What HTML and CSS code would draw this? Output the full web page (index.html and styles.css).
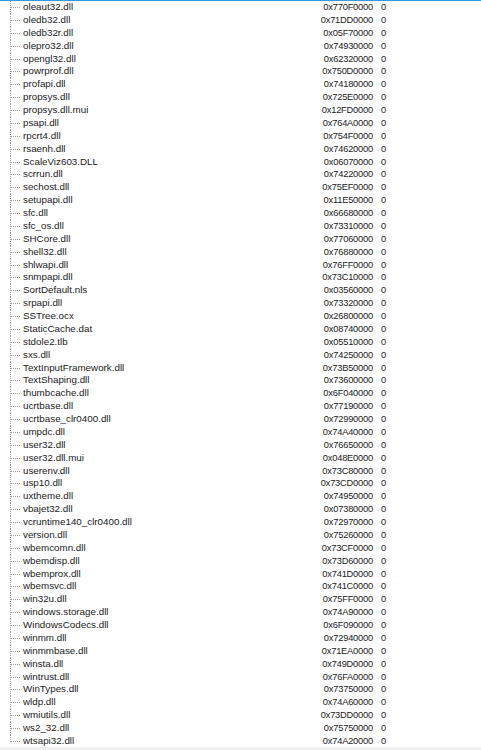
FILE: index.html
```html
<!DOCTYPE html>
<html>
<head>
<meta charset="utf-8">
<link rel="stylesheet" href="styles.css">
</head>
<body>
<div class="panel">
<ul class="tree">
<li class="row"><span class="name">oleaut32.dll</span><span class="addr">0x770F0000</span><span class="val">0</span></li>
<li class="row"><span class="name">oledb32.dll</span><span class="addr">0x71DD0000</span><span class="val">0</span></li>
<li class="row"><span class="name">oledb32r.dll</span><span class="addr">0x05F70000</span><span class="val">0</span></li>
<li class="row"><span class="name">olepro32.dll</span><span class="addr">0x74930000</span><span class="val">0</span></li>
<li class="row"><span class="name">opengl32.dll</span><span class="addr">0x62320000</span><span class="val">0</span></li>
<li class="row"><span class="name">powrprof.dll</span><span class="addr">0x750D0000</span><span class="val">0</span></li>
<li class="row"><span class="name">profapi.dll</span><span class="addr">0x74180000</span><span class="val">0</span></li>
<li class="row"><span class="name">propsys.dll</span><span class="addr">0x725E0000</span><span class="val">0</span></li>
<li class="row"><span class="name">propsys.dll.mui</span><span class="addr">0x12FD0000</span><span class="val">0</span></li>
<li class="row"><span class="name">psapi.dll</span><span class="addr">0x764A0000</span><span class="val">0</span></li>
<li class="row"><span class="name">rpcrt4.dll</span><span class="addr">0x754F0000</span><span class="val">0</span></li>
<li class="row"><span class="name">rsaenh.dll</span><span class="addr">0x74620000</span><span class="val">0</span></li>
<li class="row"><span class="name">ScaleViz603.DLL</span><span class="addr">0x06070000</span><span class="val">0</span></li>
<li class="row"><span class="name">scrrun.dll</span><span class="addr">0x74220000</span><span class="val">0</span></li>
<li class="row"><span class="name">sechost.dll</span><span class="addr">0x75EF0000</span><span class="val">0</span></li>
<li class="row"><span class="name">setupapi.dll</span><span class="addr">0x11E50000</span><span class="val">0</span></li>
<li class="row"><span class="name">sfc.dll</span><span class="addr">0x66680000</span><span class="val">0</span></li>
<li class="row"><span class="name">sfc_os.dll</span><span class="addr">0x73310000</span><span class="val">0</span></li>
<li class="row"><span class="name">SHCore.dll</span><span class="addr">0x77060000</span><span class="val">0</span></li>
<li class="row"><span class="name">shell32.dll</span><span class="addr">0x76880000</span><span class="val">0</span></li>
<li class="row"><span class="name">shlwapi.dll</span><span class="addr">0x76FF0000</span><span class="val">0</span></li>
<li class="row"><span class="name">snmpapi.dll</span><span class="addr">0x73C10000</span><span class="val">0</span></li>
<li class="row"><span class="name">SortDefault.nls</span><span class="addr">0x03560000</span><span class="val">0</span></li>
<li class="row"><span class="name">srpapi.dll</span><span class="addr">0x73320000</span><span class="val">0</span></li>
<li class="row"><span class="name">SSTree.ocx</span><span class="addr">0x26800000</span><span class="val">0</span></li>
<li class="row"><span class="name">StaticCache.dat</span><span class="addr">0x08740000</span><span class="val">0</span></li>
<li class="row"><span class="name">stdole2.tlb</span><span class="addr">0x05510000</span><span class="val">0</span></li>
<li class="row"><span class="name">sxs.dll</span><span class="addr">0x74250000</span><span class="val">0</span></li>
<li class="row"><span class="name">TextInputFramework.dll</span><span class="addr">0x73B50000</span><span class="val">0</span></li>
<li class="row"><span class="name">TextShaping.dll</span><span class="addr">0x73600000</span><span class="val">0</span></li>
<li class="row"><span class="name">thumbcache.dll</span><span class="addr">0x6F040000</span><span class="val">0</span></li>
<li class="row"><span class="name">ucrtbase.dll</span><span class="addr">0x77190000</span><span class="val">0</span></li>
<li class="row"><span class="name">ucrtbase_clr0400.dll</span><span class="addr">0x72990000</span><span class="val">0</span></li>
<li class="row"><span class="name">umpdc.dll</span><span class="addr">0x74A40000</span><span class="val">0</span></li>
<li class="row"><span class="name">user32.dll</span><span class="addr">0x76650000</span><span class="val">0</span></li>
<li class="row"><span class="name">user32.dll.mui</span><span class="addr">0x048E0000</span><span class="val">0</span></li>
<li class="row"><span class="name">userenv.dll</span><span class="addr">0x73C80000</span><span class="val">0</span></li>
<li class="row"><span class="name">usp10.dll</span><span class="addr">0x73CD0000</span><span class="val">0</span></li>
<li class="row"><span class="name">uxtheme.dll</span><span class="addr">0x74950000</span><span class="val">0</span></li>
<li class="row"><span class="name">vbajet32.dll</span><span class="addr">0x07380000</span><span class="val">0</span></li>
<li class="row"><span class="name">vcruntime140_clr0400.dll</span><span class="addr">0x72970000</span><span class="val">0</span></li>
<li class="row"><span class="name">version.dll</span><span class="addr">0x75260000</span><span class="val">0</span></li>
<li class="row"><span class="name">wbemcomn.dll</span><span class="addr">0x73CF0000</span><span class="val">0</span></li>
<li class="row"><span class="name">wbemdisp.dll</span><span class="addr">0x73D60000</span><span class="val">0</span></li>
<li class="row"><span class="name">wbemprox.dll</span><span class="addr">0x741D0000</span><span class="val">0</span></li>
<li class="row"><span class="name">wbemsvc.dll</span><span class="addr">0x741C0000</span><span class="val">0</span></li>
<li class="row"><span class="name">win32u.dll</span><span class="addr">0x75FF0000</span><span class="val">0</span></li>
<li class="row"><span class="name">windows.storage.dll</span><span class="addr">0x74A90000</span><span class="val">0</span></li>
<li class="row"><span class="name">WindowsCodecs.dll</span><span class="addr">0x6F090000</span><span class="val">0</span></li>
<li class="row"><span class="name">winmm.dll</span><span class="addr">0x72940000</span><span class="val">0</span></li>
<li class="row"><span class="name">winmmbase.dll</span><span class="addr">0x71EA0000</span><span class="val">0</span></li>
<li class="row"><span class="name">winsta.dll</span><span class="addr">0x749D0000</span><span class="val">0</span></li>
<li class="row"><span class="name">wintrust.dll</span><span class="addr">0x76FA0000</span><span class="val">0</span></li>
<li class="row"><span class="name">WinTypes.dll</span><span class="addr">0x73750000</span><span class="val">0</span></li>
<li class="row"><span class="name">wldp.dll</span><span class="addr">0x74A60000</span><span class="val">0</span></li>
<li class="row"><span class="name">wmiutils.dll</span><span class="addr">0x73DD0000</span><span class="val">0</span></li>
<li class="row"><span class="name">ws2_32.dll</span><span class="addr">0x75750000</span><span class="val">0</span></li>
<li class="row last"><span class="name">wtsapi32.dll</span><span class="addr">0x74A20000</span><span class="val">0</span></li>
</ul>
</div>
<div class="footer"></div>
</body>
</html>
```
FILE: styles.css
```css
html, body {
  margin: 0;
  padding: 0;
  background: #ffffff;
}
body {
  width: 481px;
  height: 750px;
  overflow: hidden;
  display: flex;
  flex-direction: column;
  font-family: "Liberation Sans", Arial, sans-serif;
  font-size: 9.8px;
  color: #222222;
}
.panel {
  border-top: 1px solid #3c96dc;
  flex: 1;
  overflow: hidden;
}
.tree {
  list-style: none;
  margin: 0;
  padding: 0;
}
.row {
  height: 12.88px;
  line-height: 12.88px;
  display: grid;
  grid-template-columns: 1fr 60px 108px;
  padding-left: 23px;
  white-space: nowrap;
  background-image:
    repeating-linear-gradient(to bottom, #a0a0a0 0 1px, transparent 1px 2px),
    repeating-linear-gradient(to right, #a0a0a0 0 1px, transparent 1px 2px);
  background-size: 1px 100%, 9px 1px;
  background-position: 10px 0, 11px 6px;
  background-repeat: no-repeat;
}
.row.last {
  background-size: 1px 7px, 9px 1px;
}
.addr {
  text-align: right;
  font-size: 9.3px;
  letter-spacing: -0.2px;
}
.val {
  padding-left: 8px;
  font-size: 9.3px;
}
.footer {
  height: 3px;
  background: #f0f0f0;
}
```
